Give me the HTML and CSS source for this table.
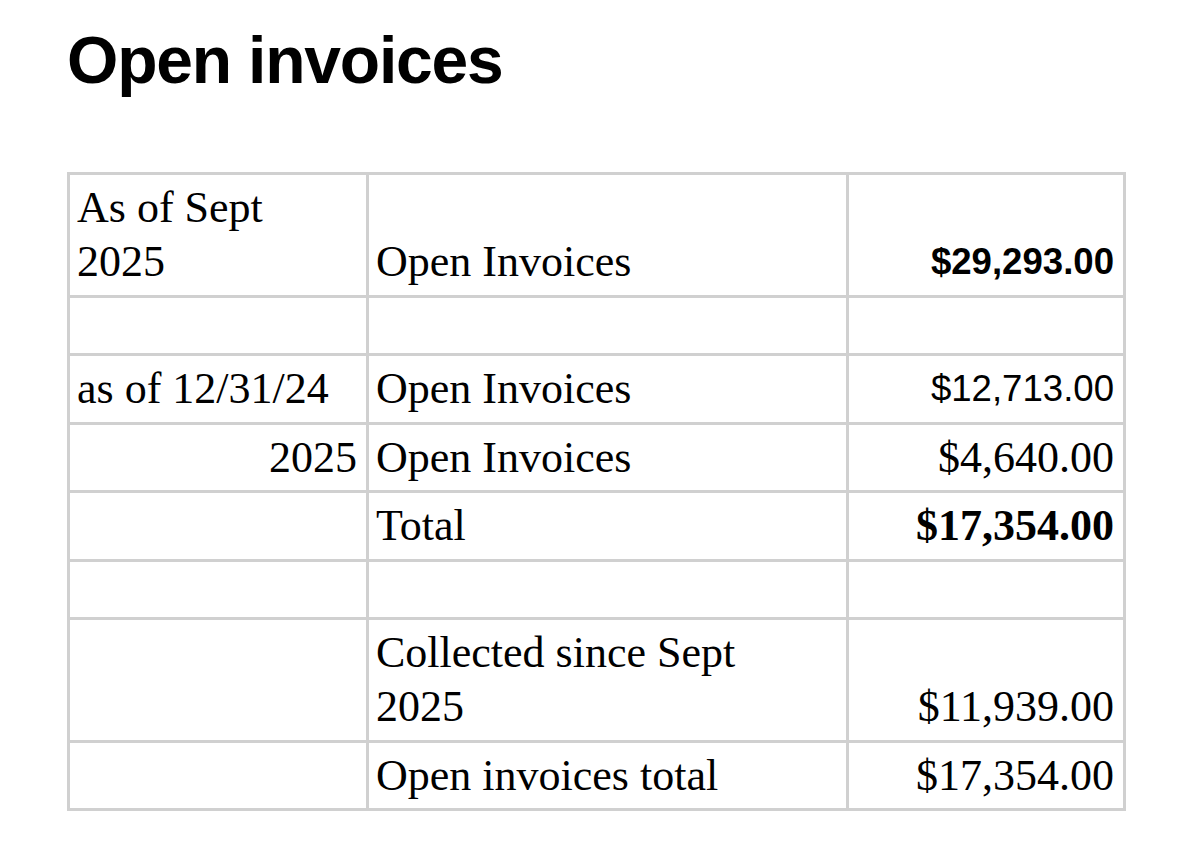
FILE: index.html
```html
<!DOCTYPE html>
<html lang="en">
<head>
<meta charset="utf-8">
<title>Open invoices</title>
<link rel="stylesheet" href="styles.css">
</head>
<body>
<main class="page">
  <h1 class="title">Open invoices</h1>
  <table class="sheet">
    <colgroup>
      <col class="c1">
      <col class="c2">
      <col class="c3">
    </colgroup>
    <tbody>
      <tr class="tall">
        <td>As of Sept<br>2025</td>
        <td>Open Invoices</td>
        <td class="num sans bold">$29,293.00</td>
      </tr>
      <tr class="gap"><td></td><td></td><td></td></tr>
      <tr>
        <td>as of 12/31/24</td>
        <td>Open Invoices</td>
        <td class="num sans">$12,713.00</td>
      </tr>
      <tr>
        <td class="num">2025</td>
        <td>Open Invoices</td>
        <td class="num">$4,640.00</td>
      </tr>
      <tr>
        <td></td>
        <td>Total</td>
        <td class="num bold">$17,354.00</td>
      </tr>
      <tr class="gap"><td></td><td></td><td></td></tr>
      <tr class="tall">
        <td></td>
        <td>Collected since Sept<br>2025</td>
        <td class="num">$11,939.00</td>
      </tr>
      <tr>
        <td></td>
        <td>Open invoices total</td>
        <td class="num">$17,354.00</td>
      </tr>
    </tbody>
  </table>
</main>
</body>
</html>
```
FILE: styles.css
```css
html, body {
  margin: 0;
  padding: 0;
  background: #ffffff;
  color: #000000;
}

.page {
  padding: 27px 0 0 67px;
}

.title {
  margin: 0 0 79px 0;
  font-family: "Liberation Sans", Arial, sans-serif;
  font-weight: 700;
  font-size: 66px;
  line-height: 66px;
  letter-spacing: -1.2px;
}

.sheet {
  border-collapse: collapse;
  table-layout: fixed;
  width: 1056px;
  font-family: "Liberation Serif", "Times New Roman", serif;
  font-size: 44px;
  line-height: 54px;
}

.c1 { width: 299px; }
.c2 { width: 480px; }
.c3 { width: 277px; }

.sheet td {
  border: 3px solid #d0d0d0;
  padding: 6px 9px 5.5px 7px;
  vertical-align: bottom;
  text-align: left;
  white-space: nowrap;
}

.sheet tr.gap td {
  height: 44px;
}

.sheet td.num {
  text-align: right;
}

.sheet td.sans {
  font-family: "Liberation Sans", Arial, sans-serif;
  font-size: 36.6px;
}

.sheet td.bold {
  font-weight: 700;
}
```
